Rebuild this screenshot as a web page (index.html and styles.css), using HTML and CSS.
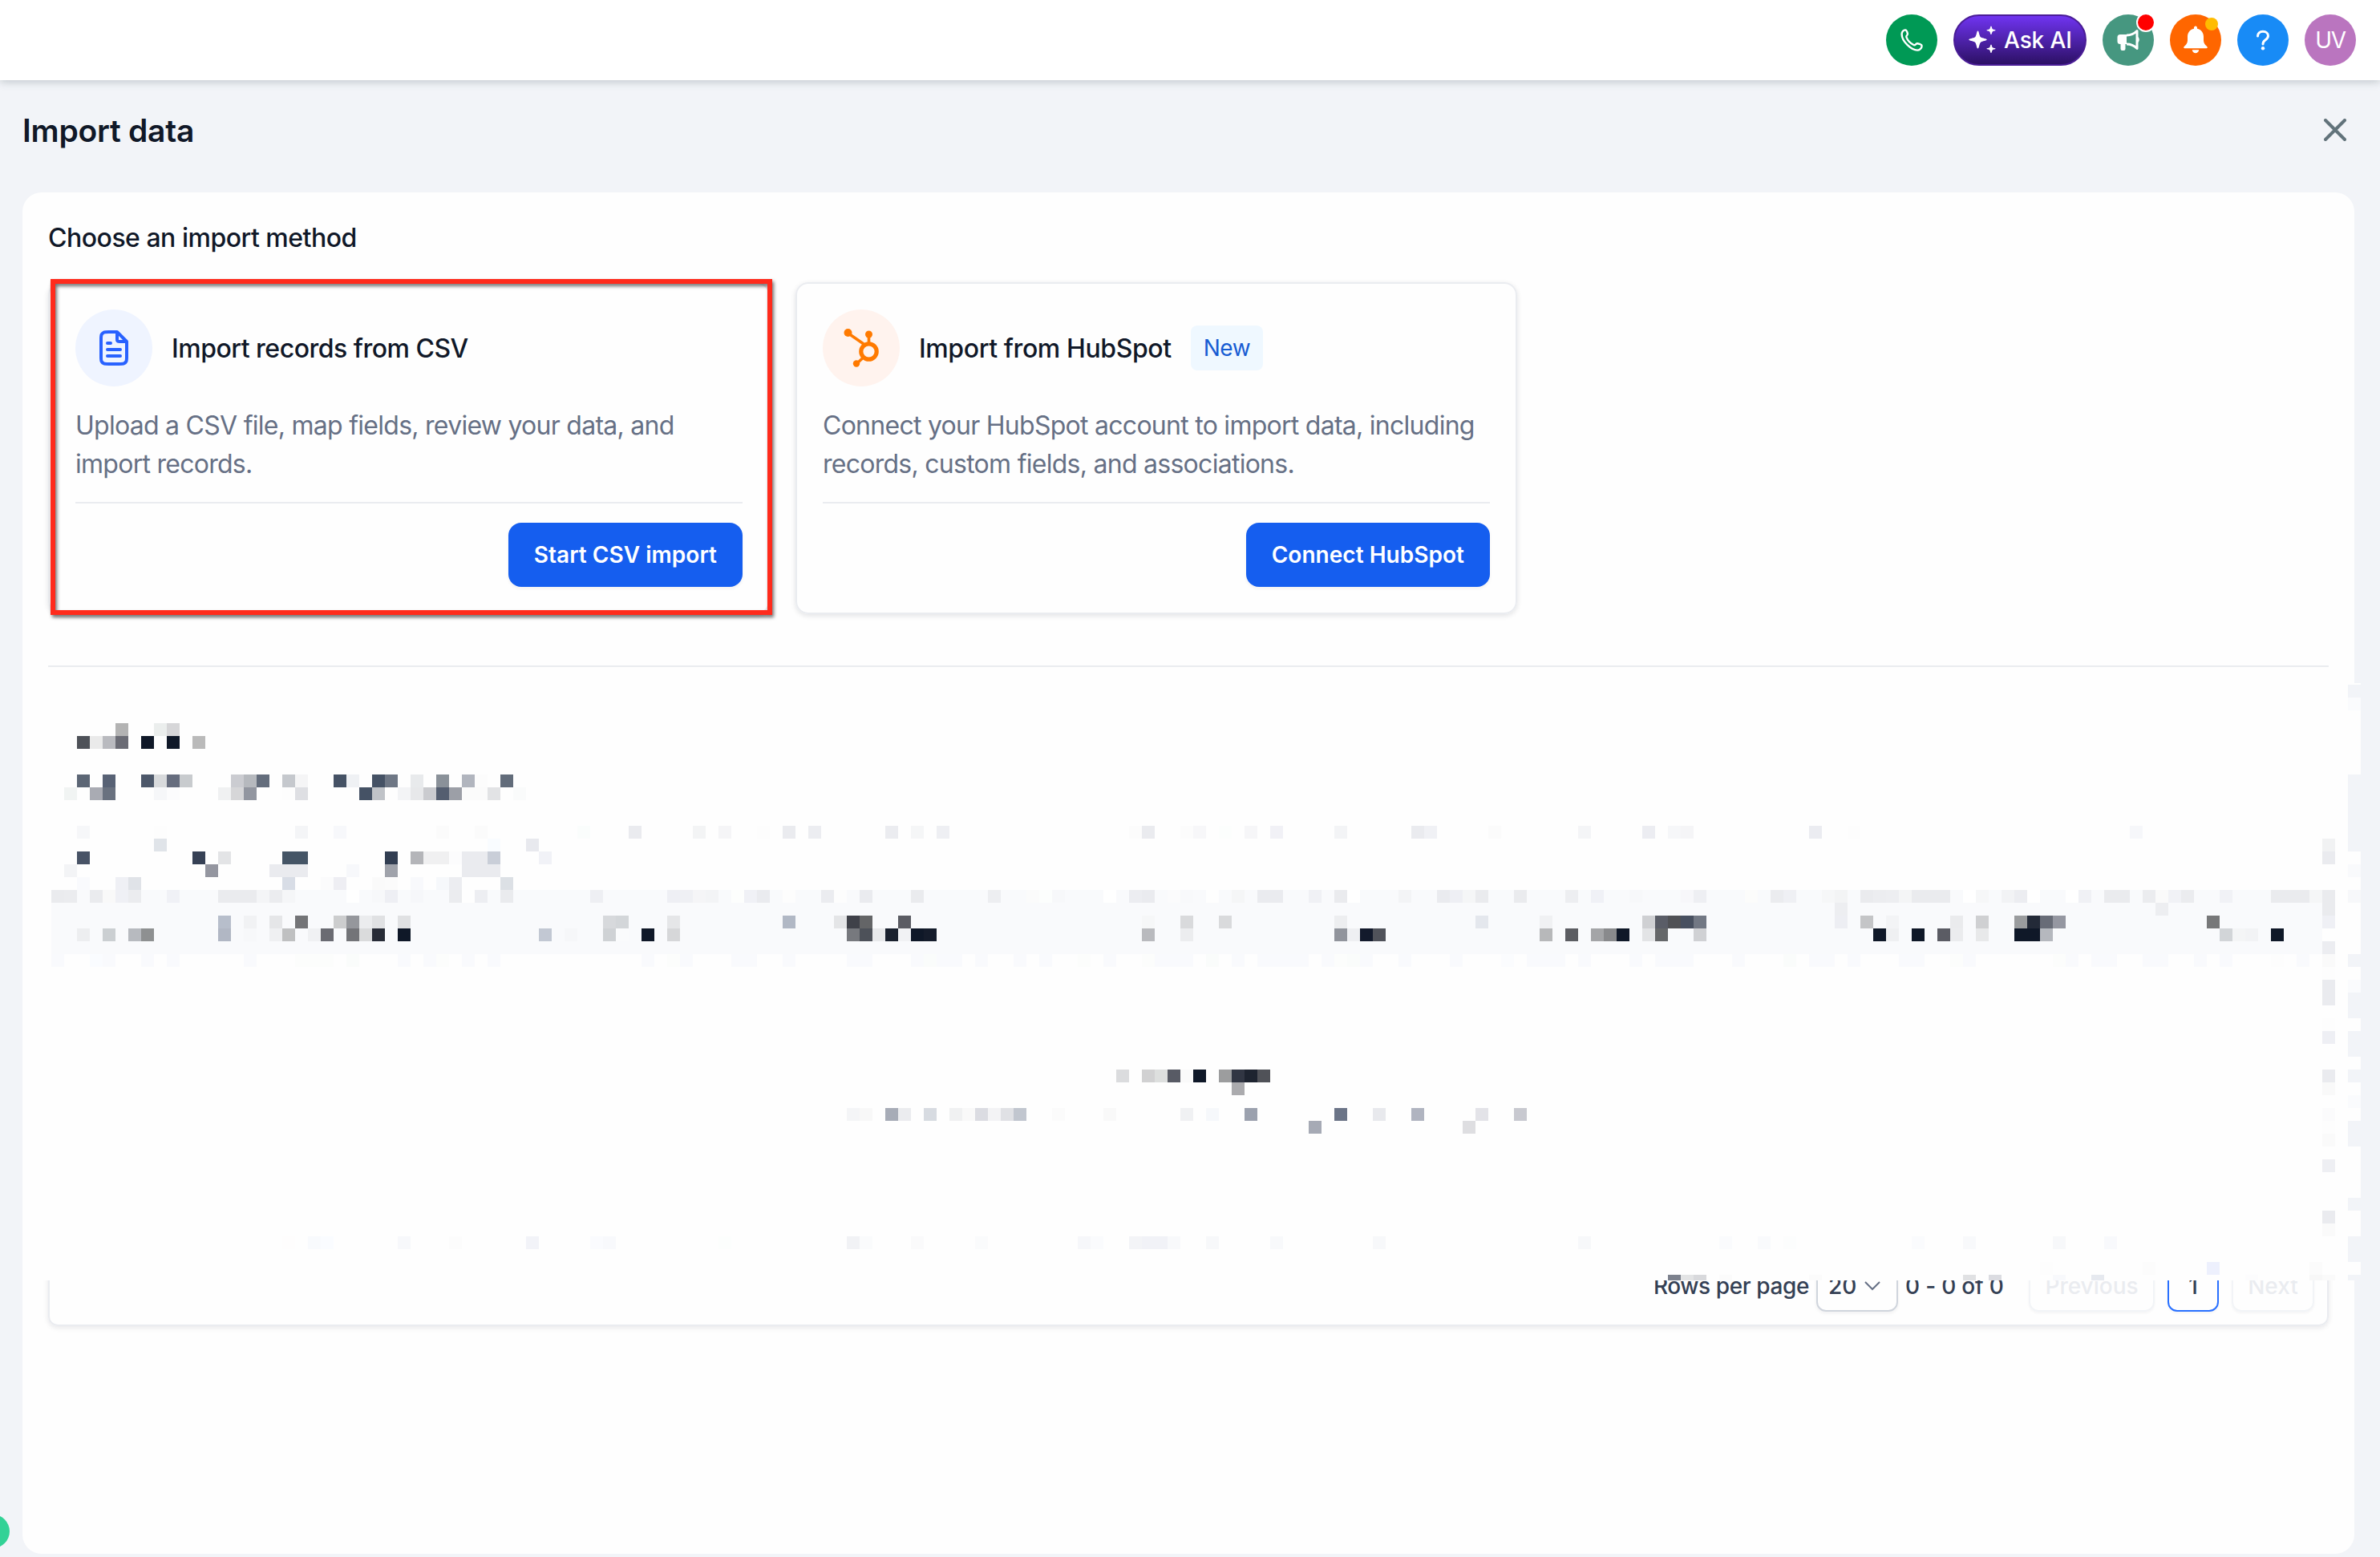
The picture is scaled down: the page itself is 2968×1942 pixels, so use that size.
FILE: index.html
```
<!DOCTYPE html>
<html lang="en">
<head>
    <meta charset="UTF-8">
    <meta name="viewport" content="width=device-width, initial-scale=1.0">
    <title>Import data</title>
    <link rel="stylesheet" href="styles.css">
</head>
<body>
    <header class="topbar">
        <div class="round phone">
            <svg width="28" height="28" viewBox="0 0 28 28" fill="none" stroke="#fff" stroke-width="2.4" stroke-linejoin="round">
                <path d="M1.6 6.6C1.6 3.6 3.8 1.4 6 1.4c1.400 0 2.400 2.400 2.900 4.600.4 1.900-2.300 2.300-1.500 4.400 1.300 3.600 5.300 7.700 9 9.600 2.200 1.100 2.700-2 4.900-1.700 2.200.4 5.300 1.500 5.300 3.100 0 2.800-3 5.200-5.600 5.200C13.400 26.600 1.600 15.600 1.600 6.600z"/>
            </svg>
        </div>
        <div class="ask-ai">
            <svg width="34" height="36" viewBox="0 0 34 36" fill="#fff">
                <path d="M11.500 6.500c1.600 0 1.600 7 3.900 8.100 1.600 1.200 7.300 1.500 7.300 2.900s-5.700 1.700-7.300 2.900c-2.300 1.300-2.300 8.100-3.900 8.100s-1.600-6.800-3.900-8.100C6 19.200.3 18.900.3 17.500s5.700-1.700 7.300-2.900c2.300-1.100 2.300-8.100 3.900-8.100z"/>
                <path d="M28 .5c1 0 .9 3 2 3.800.8.700 3.600.800 3.600 1.500s-2.800.8-3.600 1.500c-1.100.800-1 3.800-2 3.800s-.9-3-2-3.800c-.8-.7-3.600-.8-3.600-1.500s2.800-.8 3.600-1.500c1.100-.8 1-3.800 2-3.800z"/>
                <path d="M28 23.500c1 0 .9 3 2 3.800.8.700 3.600.800 3.600 1.500s-2.800.8-3.600 1.500c-1.100.800-1 3.800-2 3.800s-.9-3-2-3.800c-.8-.7-3.600-.8-3.600-1.500s2.800-.8 3.600-1.500c1.100-.8 1-3.800 2-3.800z"/>
            </svg>
            <span>Ask AI</span>
        </div>
        <div class="round news">
            <svg width="28" height="28" viewBox="0 0 28 28">
                <path d="M12 8C17 8 21.500 6 25 2.500v22C21.500 21 17 19 12 19" fill="none" stroke="#fff" stroke-width="3" stroke-linejoin="round"/>
                <path d="M4 7h8v12h-1.500v6a2 2 0 0 1-2 2H6.500a2 2 0 0 1-2-2v-6H4a3.500 3.500 0 0 1-3.500-3.500v-5A3.500 3.500 0 0 1 4 7zM25.500 9.500c3 1.500 3 6.500 0 8z" fill="#fff"/>
            </svg>
            <span class="dot red"></span>
        </div>
        <div class="round alerts">
            <svg width="30" height="35" viewBox="0 0 30 35" fill="#fff">
                <path d="M15 .5c1.300 0 2 1 2 2.300v1c5 1.200 8 5 8 10v4.500c0 3 1.500 5.500 3.500 7 2 1.500 1.500 3-.5 3H2c-2 0-2.500-1.500-.5-3 2-1.500 3.500-4 3.500-7v-4.500c0-5 3-8.800 8-10v-1C13 1.500 13.700.5 15 .5zM10.800 30.300h8.400c0 2.200-2 4-4.200 4s-4.200-1.800-4.200-4z"/>
            </svg>
            <span class="dot amber"></span>
        </div>
        <div class="round help">
            <svg width="18" height="26" viewBox="0 0 18 26">
                <path d="M2.500 8C2.500 4.500 5 2.300 9 2.300s6.500 2.200 6.500 5.500c0 2.700-1.700 3.900-3.600 5.200C10 14.300 9 15.200 9 18" fill="none" stroke="#fff" stroke-width="3" stroke-linecap="round"/>
                <circle cx="9" cy="23.300" r="2.200" fill="#fff"/>
            </svg>
        </div>
        <div class="round avatar">UV</div>
    </header>

    <div class="page-head">
        <h1>Import data</h1>
        <svg class="close" width="28" height="28" viewBox="0 0 28 28" fill="none" stroke="#62737b" stroke-width="4" stroke-linecap="round">
            <path d="M2 2l24 24M26 2L2 26"/>
        </svg>
    </div>

    <main class="panel">
        <h2>Choose an import method</h2>

        <div class="methods">
            <div class="method">
                <div class="method-head">
                    <div class="method-icon csv">
                        <svg width="48" height="48" viewBox="0 0 24 24" fill="none" stroke="#2962ff" stroke-width="2" stroke-linecap="round" stroke-linejoin="round">
                            <path d="M14 2.300V6.400c0 .56 0 .84.110 1.050a1 1 0 0 0 .44.440c.21.110.49.110 1.050.110h4.100M16 13H8M16 17H8M10 9H8M14 2H8.800c-1.680 0-2.520 0-3.160.330a3 3 0 0 0-1.310 1.310C4 4.280 4 5.120 4 6.800v10.400c0 1.680 0 2.520.330 3.160a3 3 0 0 0 1.310 1.310c.64.330 1.480.330 3.160.330h6.400c1.680 0 2.520 0 3.160-.33a3 3 0 0 0 1.310-1.310c.33-.64.330-1.480.330-3.160V8l-6-6z"/>
                        </svg>
                    </div>
                    <h3>Import records from CSV</h3>
                </div>
                <p>Upload a CSV file, map fields, review your data, and import records.</p>
                <div class="method-foot">
                    <button>Start CSV import</button>
                </div>
                <div class="highlight"></div>
            </div>

            <div class="method">
                <div class="method-head">
                    <div class="method-icon hubspot">
                        <svg width="46" height="50" viewBox="0 0 46 50" fill="none" stroke="#ff7a00">
                            <circle cx="32.500" cy="29.500" r="9.700" stroke-width="5.200"/>
                            <path d="M32.500 19V8M26 20L6.500 6.500M25.500 37L18 44" stroke-width="3.600"/>
                            <circle cx="6.500" cy="6" r="5" fill="#ff7a00" stroke="none"/>
                            <circle cx="32.500" cy="8" r="4.500" fill="#ff7a00" stroke="none"/>
                            <circle cx="17" cy="44.500" r="4.200" fill="#ff7a00" stroke="none"/>
                        </svg>
                    </div>
                    <h3 class="hubspot-title">Import from HubSpot</h3>
                    <span class="badge">New</span>
                </div>
                <p>Connect your HubSpot account to import data, including records, custom fields, and associations.</p>
                <div class="method-foot">
                    <button>Connect HubSpot</button>
                </div>
            </div>
        </div>

        <div class="history">
            <div class="history-table">
                <div class="pager">
                    <span class="rows-label">Rows per page</span>
                    <span class="select">20
                        <svg width="22" height="14" viewBox="0 0 22 14" fill="none" stroke="#667085" stroke-width="2"><path d="M2 2l9 9 9-9"/></svg>
                    </span>
                    <span class="range">0 - 0 of 0</span>
                    <span class="page-btn prev">Previous</span>
                    <span class="page-btn current">1</span>
                    <span class="page-btn next">Next</span>
                </div>
            </div>
            <svg class="mosaic" id="mosaic" width="2896" height="745" viewBox="48 852 2896 745" shape-rendering="crispEdges"></svg>
        </div>
    </main>

    <div class="status-bubble"></div>

    <script src="script.js"></script>
</body>
</html>
```
FILE: styles.css
```
* {
    box-sizing: border-box;
}
body {
    margin: 0;
    height: 1942px;
    overflow: hidden;
    position: relative;
    background-color: #f2f4f8;
    font-family: Inter, sans-serif;
    color: #101828;
}
h1, h2, h3, p {
    margin: 0;
}
svg {
    display: block;
}
.topbar {
    height: 100px;
    padding-right: 30px;
    display: flex;
    align-items: center;
    justify-content: flex-end;
    gap: 20px;
    background-color: #fff;
    box-shadow: 0 2px 10px rgba(60, 80, 85, 0.28);
}
.round {
    width: 64px;
    height: 64px;
    border-radius: 50%;
    display: flex;
    align-items: center;
    justify-content: center;
    position: relative;
}
.phone {
    background-color: #009955;
}
.news {
    background-color: #469780;
}
.alerts {
    background-color: #ff6600;
}
.alerts svg {
    margin-top: -2px;
}
.help {
    background-color: #188bf6;
}
.avatar {
    background-color: #ba75bf;
    color: #fff;
    font-size: 28px;
    letter-spacing: -1.3px;
}
.ask-ai {
    width: 166px;
    height: 64px;
    padding-left: 17px;
    display: flex;
    align-items: center;
    gap: 10px;
    border: 2px solid #4a1d96;
    border-radius: 32px;
    background: linear-gradient(#7235f5, #2a0f60);
    background-origin: border-box;
    color: #fff;
    font-size: 28px;
    font-weight: 500;
    letter-spacing: -0.1px;
    white-space: nowrap;
}
.dot {
    position: absolute;
    border-radius: 50%;
}
.dot.red {
    top: -2px;
    right: -2px;
    width: 24px;
    height: 24px;
    background-color: #ff0000;
    border: 2px solid #fff;
}
.dot.amber {
    top: 4px;
    right: 4px;
    width: 16px;
    height: 16px;
    background-color: #ffbc00;
}
.page-head {
    height: 140px;
    padding: 0 42px 16px 28px;
    display: flex;
    align-items: center;
    justify-content: space-between;
}
.page-head h1 {
    font-size: 39px;
    font-weight: 600;
    letter-spacing: -0.25px;
    line-height: 60px;
    padding-top: 2px;
}
.panel {
    height: 1698px;
    margin: 0 32px 0 28px;
    padding: 32px;
    background-color: #fefefe;
    border-radius: 24px;
}
.panel h2 {
    font-size: 32px;
    font-weight: 500;
    line-height: 48px;
    letter-spacing: -0.5px;
    padding-top: 1px;
    margin-bottom: 31px;
}
.methods {
    display: flex;
    gap: 32px;
}
.method {
    position: relative;
    width: 900px;
    height: 414px;
    padding: 32px;
    border: 2px solid #eaecf0;
    border-radius: 16px;
    box-shadow: 0 2px 6px rgba(16, 24, 40, 0.12);
}
.method-head {
    display: flex;
    align-items: center;
    margin-bottom: 24px;
}
.method-icon {
    width: 96px;
    height: 96px;
    margin-right: 24px;
    border-radius: 50%;
    display: flex;
    align-items: center;
    justify-content: center;
}
.csv {
    background-color: #eff4ff;
}
.hubspot {
    background-color: #fff3ee;
}
.method h3 {
    font-size: 32px;
    font-weight: 500;
    letter-spacing: -0.5px;
    padding-top: 1px;
}
.method .hubspot-title {
    letter-spacing: -0.4px;
}
.badge {
    height: 56px;
    margin-left: 24px;
    padding: 0 16px;
    border-radius: 8px;
    background-color: #eff8ff;
    color: #175cd3;
    font-size: 28px;
    line-height: 56px;
    letter-spacing: -0.5px;
}
.method p {
    font-size: 32px;
    line-height: 48px;
    letter-spacing: -0.73px;
    color: #667085;
    padding-top: 1px;
    margin-bottom: 23px;
}
.method-foot {
    display: flex;
    justify-content: flex-end;
    padding-top: 24px;
    border-top: 2px solid #eaecf0;
}
.method-foot button {
    height: 80px;
    padding: 0 32px;
    border: none;
    border-radius: 16px;
    background-color: #155eef;
    box-shadow: 0 2px 4px rgba(16, 24, 40, 0.06);
    color: #fff;
    font-family: inherit;
    font-size: 28px;
    font-weight: 600;
    letter-spacing: 0.03px;
}
.highlight {
    position: absolute;
    top: -6px;
    left: 1px;
    width: 900px;
    height: 419px;
    border: 6px solid #ff2b1c;
    filter: drop-shadow(2px 3px 2px rgba(0, 0, 0, 0.55));
}
.history {
    position: relative;
    height: 824px;
    margin-top: 64px;
    padding-top: 24px;
    border-top: 2px solid #eaecf0;
}
.history-table {
    height: 798px;
    display: flex;
    flex-direction: column;
    justify-content: flex-end;
    border: 2px solid #eaecf0;
    border-radius: 12px;
    box-shadow: 0 2px 6px rgba(16, 24, 40, 0.1);
}
.pager {
    display: flex;
    align-items: center;
    justify-content: flex-end;
    padding: 0 16px 16px;
    color: #344054;
    font-size: 28px;
    font-weight: 500;
    white-space: nowrap;
}
.rows-label {
    letter-spacing: -0.4px;
}
.select {
    width: 102px;
    height: 64px;
    margin: 0 9px;
    padding: 0 13px;
    display: flex;
    align-items: center;
    justify-content: space-between;
    border: 2px solid #d0d5dd;
    border-radius: 12px;
    box-shadow: 0 2px 4px rgba(16, 24, 40, 0.06);
}
.select svg {
    margin-right: 6px;
}
.range {
    width: 154px;
    letter-spacing: -0.2px;
}
.page-btn {
    height: 64px;
    margin-left: 16px;
    display: flex;
    align-items: center;
    justify-content: center;
    border: 2px solid #f2f4f7;
    border-radius: 12px;
    color: #eaecf0;
    box-shadow: 0 2px 3px rgba(16, 24, 40, 0.04);
}
.prev {
    width: 157px;
    margin-left: 0;
}
.current {
    width: 64px;
    border-color: #2970ff;
    color: #344054;
}
.next {
    width: 103px;
}
/* Censored part of the table, starts over the divider gap and runs past the panel edge */
.mosaic {
    position: absolute;
    top: 20px;
    left: -12px;
}
.status-bubble {
    position: absolute;
    left: -30px;
    top: 1889px;
    width: 42px;
    height: 42px;
    border-radius: 50%;
    background-color: #32d296;
}
```
FILE: script.js
```
// Each row lists "column:colour" or "first-last:colour"; cells are 16px squares
const CELL = 16;
const ORIGIN_Y = 902;
const LAST_Y = 1597;

const mosaicRows = {
    '-3': '183:f2f4f8',
    '-2': '183:fafbfd',
    0: '9:b3b3b3 12:ebeeed 13:d6d6d8',
    1: '6:4e5158 7:eaeaea 8:b9babf 9:6b6c75 11:0f1828 13:0f1828 15:bababa',
    4: '6:5c6675 8:586275 11:4d586a 12:d8dadc 13:666d7e 14:c8cbce 18:cbccd1 19:b6b9be 20:646d7c 22:c5c8cd 23:f5f5f6 26:455265 27:eff1f4 29:455265 30:6e7785 32:e8eaec 34:8a9199 36:b1b5be 37:fcfcfc 39:626c7a 183:f2f4f8',
    5: '5:f1f4f3 7:a9abb3 8:69717f 12:f6f7f9 13:fcfcfd 17:f0f1f2 18:d6d6d8 19:9296a0 22:fdfdfd 23:dedfe3 28:455265 29:c0c3c8 31:f3f4f6 32:e7e8ea 33:cacbcf 34:545e70 35:9c9fa7 36-37:fbfbfb 38:e2e3e5 40:fafbfb 183:f2f4f8',
    6: '183:f2f4f8',
    7: '183:f2f4f8',
    8: '6:f6f7f9 12:fdfdfd 23:f4f5f7 26:f7f8fb 34:fbfbfb 37:fbfbfb 45:fafdfc 49:eaebef 54:f3f4f5 56:f5f5f7 59:fdfdfd 61:eaebef 63:ecedf1 69:ebecf0 71:f5f6f7 73:eeeff3 88:fcfcfc 89:eaebef 92:fcfcfc 93:f7f7f9 95:fcfefd 97:f6f6f8 99:f1f1f6 104:f3f4f6 110:eaebef 111:f0f1f5 116:fbfbfb 123:f4f5f7 128:ecedf2 130:f6f7f9 131:f5f5f7 141:ebecf1 144:fdfdfd 166:f6f7fa 183:f2f4f8',
    9: '12:e0e4e9 38:f9fcff 41:e8e9ee 181:f1f2f3 183:f2f4f8',
    10: '6:485366 15:364155 17:e3e4e6 22-23:455566 30:323e52 32:b4b5b9 33-34:f0f0f1 35:fcfcfd 36-37:eaebef 38:c9ced8 42:f1f2f7 181:eaebef',
    11: '5:f3f4f6 16:9496a0 21-23:eaebef 27:f7f8fb 30:a0a3ab 36-38:eaebef 183:f9fafc',
    12: '6:f9fafd 9:eff0f5 10:e0e3e8 22:d8dde6 25:fbfbfc 26:eeeef3 29:fafafa 30:fbfbfb 32:f8f9fc 34:f6f8fb 35:ecedf1 39:dce0e5',
    13: '4-181:f9fafc 4:eaebee 5:ebecef 7:eaebee 8:f9f9f9 9:eff0f5 10:ebecef 13:f0f1f6 17-19:eaebee 20:f4f5f7 21:ebecef 22:f5f6f8 27:ffffff 29:f7f8fa 30:eeeff4 32:f6f7fa 35:ebecef 36:fefefe 37:edeef2 39:eaebee 46:eeeff3 52:eeeff4 53:eff0f4 54:f5f5f7 55:f3f4f6 57:fdfefd 58:f0f1f6 59:eaebef 61:fdfdfd 64:ebecf0 65:fdfdfd 67:eaebef 71:eaebee 77:edeef1 80:fbfbfb 81:fcfefd 82:f7f8fa 86:ffffff 88:ecedf1 89:eaebef 91:fbfbfc 92:f8f9fb 94:fefefe 96:f5f6f7 98-99:eaebef 102:f0f1f5 104:eaebee 105:ffffff 109:f3f4f6 112:eaebef 113:eeeff4 114:f5f6f7 115:eaebee 118:eaebee 122:edeef1 124:f0f1f6 127:f7f8fa 131:f7f7fa 132:eeeff3 136:fcfcfb 138:ebecef 139:eff0f4 142:f6f7f8 143:f3f4f5 145:eaebee 146:ecedf0 147:edeef1 148:f4f5f6 149-151:eaebee 153:ffffff 154:f6f7f8 156:f2f3f5 157:ecedf1 158:ffffff 161:ffffff 162:f0f1f5 164-165:eaebee 167:ebecef 168:fafafa 169:f1f2f6 170:ebecef 173:f1f2f6 177-179:eaebee 180:f5f6f7 181:eaebee 183:f7f8fa',
    14: '4-180:f9fafc 143:edeef1 168:edeef1 181:eaebee',
    15: '4-180:f9fafc 17:b7becb 19:f1f2f4 21:e5e6e8 23:737477 26:cccdce 27:95979c 28:ebecee 29:e0e1e3 31:e0e1e3 47:d7d9dc 48:d3d6d9 52:e5e6e8 61:b1b8c5 65:e4e5e7 66:3f4149 67:646567 70:5b5c63 89:f6f7f8 92:d9dadc 95:d9dadc 104:edeef0 115:e4e7ed 120:f0f1f3 128:cfd0d3 129:5a5d67 130:505155 131:485060 132:727884 143:edeef3 145:c4c5c7 147:f3f4f6 152:eaebed 154:cfd0d2 157:9a9c9e 158:232a38 159:686c77 160:9597a1 172:777879 181:eff0f5',
    16: '4-180:f9fafc 6:edeef0 8:cbcfd2 10:b7babf 11:8e9091 17:b1b7c4 19:f7f8fa 21:eff0f2 22:bfc0c1 24:f0f1f3 25:6a6b72 27:737478 28:dadbdc 29:282c37 31:0f1828 42:c2c8d3 44:f6f7f9 47:cfd2d5 48:fafbfc 50:0f1828 52:d6d7d9 66:77797e 67:4d5159 68:e8e9eb 69:1a212e 70:f1f2f4 71:0f1828 72:151c2b 89:b9babe 92:ecedef 104:91949c 105:eeeff2 106:131a2c 107:50525a 120:b7b8ba 122:5c5d62 124:a4a5a7 125:898a8c 126:0f1828 128:e3e4e6 129:656769 132:d0d1d4 146:0f1828 147:eff0f2 149:0f1828 151:5b5c64 152:ebecee 154:e8e9ea 157-158:0f1828 159:b5b8be 173:d2d5d8 174:f4f5f6 175:f2f3f5 177:0f1828',
    17: '4-180:f9fafc 181:ecedf1',
    18: '4:f9fafd 7:fafcff 8:f9fafd 11:f9fafd 13:f9fafd 19:f9fafd 23-25:fcfdfc 27:fafcfb 31:f9fafd 33:f9fafd 34:fcfdfc 36:f9fafd 38:f9fafd 50:f9fafd 52:fcfdfc 53:f9fafd 57-58:f9fafd 61:f9fafd 66-67:f9fafd 71:f9fafd 72:fafcfb 73-74:f9fafd 76:f9fafd 79:f9fafd 81:f9fafd 84:fcfdfc 86:f9fafd 89:fcfdfc 90-92:f9fafd 94:fafcfb 96:f9fafd 98-101:f9fafd 103:f9fafd 104:fcfdfc 105:fafcfb 106:f9fafd 109:f9fafd 113:f9fafd 117:fbfcfe 119-121:f9fafd 123:f9fafd 127:f9fafd 129-131:f9fafd 135:f9fafd 139:fafcfb 141-142:f9fafd 144:f9fafd 148-149:f9fafd 152:fcfdfc 153:f9fafd 160:fcfdfc 161:f9fafd 163-164:f9fafd 167-168:f9fafd 171:f9fafd 173:f9fafd 177:fdfdfd 179:f9fafd 181:fafafa 183:f2f4f8',
    19: '181:fdfdfd',
    20: '181:eaebef 183:fafbfd',
    21: '181:eaebef 183:f2f4f8',
    22: '183:f2f4f8',
    23: '181:fdfdfd',
    24: '181:eeeff4 183:f2f4f8',
    25: '183:f2f4f8',
    27: '87:dbdcde 89:d1d1d2 90:dddfde 91:585b65 92:fafafa 93:0f1828 95:9c9d9e 96:313643 97:1e2430 98:505258 181:eaebef 183:f2f4f8',
    28: '96:ababae 181:f9f9f9',
    29: '183:fafbfd',
    30: '66:f4f5f7 67:f8f8f8 69:a7acb7 70:ebecef 72:d7dbe1 74:f0f1f2 75:f9f9f9 76:dbdce2 77:f3f3f5 78:e0e1e5 79:c1c6cf 82:fbfbfb 86:f9f9f9 92:f0f1f3 94:f6f8fb 97:9ba1ae 104:6b7487 107:e8e9ed 110:b0b4c0 115:e3e3e8 118:c8c9d0 181:fbfbfc',
    31: '102:a6aab5 114:dedee1 181:fdfdfd 183:f2f4f8',
    32: '181:fafafa 183:f2f4f8',
    34: '181:eeeff3',
    37: '183:f2f4f8',
    38: '181:eaebef',
    39: '181:fafafa',
    40: '22:fefdfd 24:f8fafd 25:fafcff 31:f7f8fb 35:fcfcfc 41:f2f3f8 46:fafbfe 47:f8f9fc 56:fcfefd 66:f1f2f5 67:fafbfc 71:fafafb 76:fafbfc 84:f6f7fa 85:fafbfd 88:f3f4f7 89-90:f1f2f7 91:f8f9fb 94:f7f8fa 99:f8f9fb 107:f7f8fa 123:f7f8fa 134:fafbfd 137:f9fafc 139:fcfdfd 149:fafbfd 153:f8f9fb 160:f7f8fa 164:f8f9fc 183:f2f4f8',
    41: '183:f2f4f8',
    42: '159:fdfdfd 167:fcfcfc 172:edf0fd 180:fbfbfb',
    43: '130:7c818d 131:e3e4e5 132:d8d9dc 134:fbfbfb 141:fbfbfb 153:e0e1e3 155:dbdce1 160:f8f9fc 163:e6e9ef 175:fcfcfd 180:f7f7f7 181:fafafa 183:f2f4f8'
};

const mosaic = document.getElementById('mosaic');

function addRect(x, y, width, height, color) {
    const rect = document.createElementNS('http://www.w3.org/2000/svg', 'rect');
    rect.setAttribute('x', x);
    rect.setAttribute('y', y);
    rect.setAttribute('width', width);
    rect.setAttribute('height', height);
    rect.setAttribute('fill', color);
    mosaic.appendChild(rect);
}

// Blank out everything behind the cells first
addRect(48, 852, 2896, 745, '#fefefe');

Object.keys(mosaicRows).forEach(row => {
    const y = ORIGIN_Y + Number(row) * CELL;
    mosaicRows[row].split(' ').forEach(cell => {
        const [columns, color] = cell.split(':');
        const [first, last] = columns.split('-').map(Number);
        const count = (last || first) - first + 1;
        addRect(first * CELL, y, count * CELL, Math.min(CELL, LAST_Y - y), '#' + color);
    });
});
```
